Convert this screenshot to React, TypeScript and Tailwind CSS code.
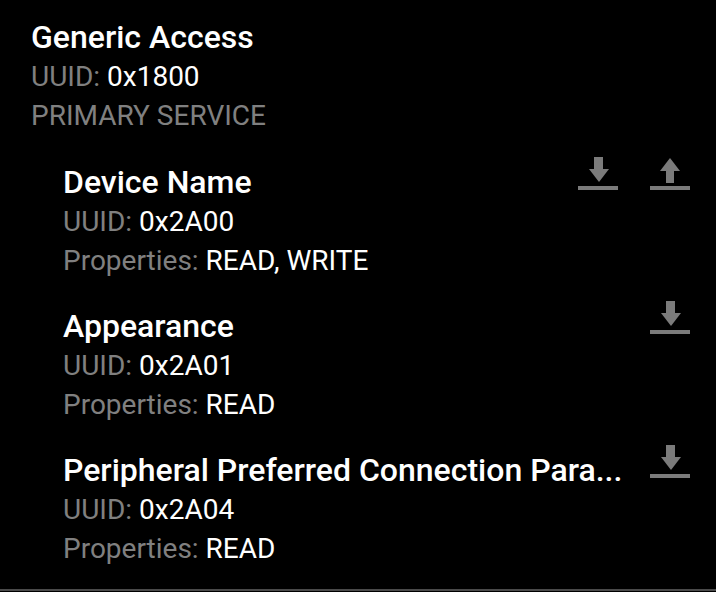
import React from 'react';

interface Characteristic {
  name: string;
  uuid: string;
  properties: string;
  canRead: boolean;
  canWrite: boolean;
}

const characteristics: Characteristic[] = [
  { name: 'Device Name', uuid: '0x2A00', properties: 'READ, WRITE', canRead: true, canWrite: true },
  { name: 'Appearance', uuid: '0x2A01', properties: 'READ', canRead: true, canWrite: false },
  // shown already shortened, the way the list cuts long names
  { name: 'Peripheral Preferred Connection Para...', uuid: '0x2A04', properties: 'READ', canRead: true, canWrite: false }
];

const DownloadIcon = () => (
  <svg width="40" height="34" viewBox="0 0 40 34" className="block">
    <rect x="16" y="0" width="9" height="13" fill="#7b7b7b" />
    <polygon points="11,12 31,12 21,25" fill="#7b7b7b" />
    <rect x="0" y="29" width="40" height="4" fill="#7b7b7b" />
  </svg>
);

const UploadIcon = () => (
  <svg width="40" height="34" viewBox="0 0 40 34" className="block">
    <polygon points="20,1 30,14 10,14" fill="#7b7b7b" />
    <rect x="16" y="13" width="8" height="13" fill="#7b7b7b" />
    <rect x="0" y="29" width="40" height="4" fill="#7b7b7b" />
  </svg>
);

const App: React.FC = () => {
  return (
    <div
      className="w-[716px] h-[592px] bg-black overflow-hidden flex flex-col"
      style={{ fontFamily: 'Roboto, "Noto Sans", sans-serif' }}
    >
      <div className="flex-1 pt-[18px] pl-[31px] pr-[26px]">
        {/* Service */}
        <div className="text-[32px] leading-[39px] font-medium text-white">Generic Access</div>
        <div className="text-[28px] leading-[39px] text-[#808080]">
          UUID: <span className="text-white">0x1800</span>
        </div>
        <div className="text-[28px] leading-[39px] text-[#808080]">PRIMARY SERVICE</div>

        {/* Characteristics */}
        <div className="pl-[32px]">
          {characteristics.map(c => (
            <div key={c.uuid} className="flex items-start gap-[24px] mt-[27px] first:mt-[28px]">
              <div className="flex-1 min-w-0">
                <div className="text-[32px] leading-[39px] font-medium text-white whitespace-nowrap">{c.name}</div>
                <div className="text-[28px] leading-[39px] text-[#808080]">
                  UUID: <span className="text-white">{c.uuid}</span>
                </div>
                <div className="text-[28px] leading-[39px] text-[#808080]">
                  Properties: <span className="text-white">{c.properties}</span>
                </div>
              </div>
              <div className="flex gap-[32px] mt-[-6px]">
                {c.canRead && <DownloadIcon />}
                {c.canWrite && <UploadIcon />}
              </div>
            </div>
          ))}
        </div>
      </div>
      <div className="h-[2px] bg-[#4a4a4a] mb-[1px]" />
    </div>
  );
};

export default App;
